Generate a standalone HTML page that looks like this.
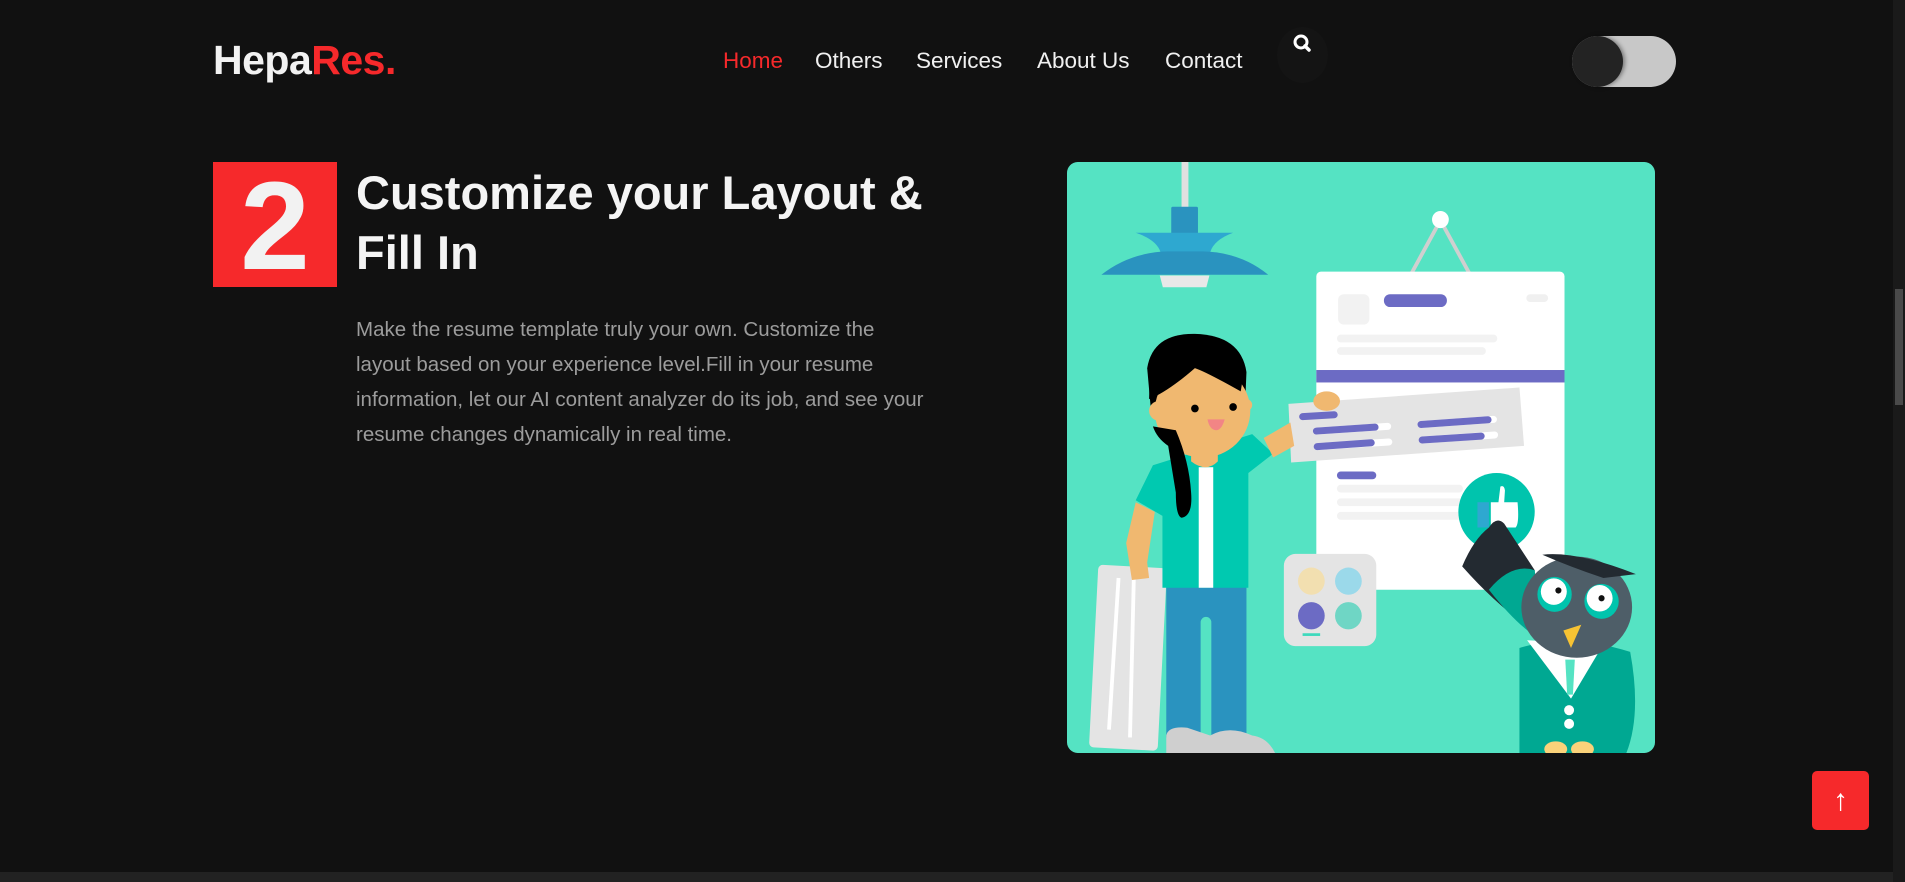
<!DOCTYPE html>
<html><head><meta charset="utf-8"><style>
html,body{margin:0;padding:0}
body{width:1905px;height:882px;background:#111;overflow:hidden;position:relative;font-family:"Liberation Sans",Arial,sans-serif}
.logo{position:absolute;left:213px;top:37px;font-size:41px;font-weight:bold;color:#f2f2f2;letter-spacing:-0.5px}
.logo span{color:#f6292b}
.nav{position:absolute;top:48px;left:723px;font-size:22.5px;color:#f0f0f0}
.nav a{position:absolute;white-space:nowrap}
.search{position:absolute;left:1277px;top:27px;width:51px;height:56px;border-radius:50%;background:#141414}
.tog{position:absolute;left:1572px;top:36px;width:104px;height:51px;border-radius:26px;background:#c8c8c8}
.tog i{position:absolute;left:0;top:0;width:51px;height:51px;border-radius:50%;background:#232323;box-shadow:2px 0 4px rgba(0,0,0,.4)}
.num{position:absolute;left:213px;top:162px;width:124px;height:125px;background:#f6292b;color:#f2f2f2;font-weight:bold;font-size:125px;line-height:130px;text-align:center;overflow:hidden}
h1{position:absolute;left:356px;top:163px;margin:0;font-size:47px;line-height:60px;color:#f4f4f4;font-weight:bold;width:600px}
p{position:absolute;left:356px;top:312px;margin:0;width:600px;font-size:20.5px;line-height:35px;color:#9c9c9c}
.up{position:absolute;left:1812px;top:771px;width:57px;height:59px;background:#f6292b;border-radius:5px;color:#fff;font-size:30px;text-align:center;line-height:59px}
.sb{position:absolute;right:0;top:0;width:12px;height:882px;background:#1a1a1a}
.sb i{position:absolute;left:2px;top:289px;width:8px;height:116px;background:#4a4a4a}
.bot{position:absolute;left:0;top:872px;width:1893px;height:10px;background:#222}
</style></head><body>
<div class="logo">Hepa<span>Res.</span></div>
<div class="nav">
<a style="left:0;color:#f6292b">Home</a>
<a style="left:92px">Others</a>
<a style="left:193px">Services</a>
<a style="left:314px">About Us</a>
<a style="left:442px">Contact</a>
</div>
<div class="search"><svg width="51" height="30" viewBox="0 0 51 30"><circle cx="24" cy="15" r="6" fill="none" stroke="#fff" stroke-width="3"/><line x1="28" y1="19" x2="32" y2="23" stroke="#fff" stroke-width="3.5" stroke-linecap="round"/></svg></div>
<div class="tog"><i></i></div>
<div class="num">2</div>
<h1>Customize your Layout &amp; Fill In</h1>
<p>Make the resume template truly your own. Customize the<br>layout based on your experience level.Fill in your resume<br>information, let our AI content analyzer do its job, and see your<br>resume changes dynamically in real time.</p>

<svg style="position:absolute;left:1067px;top:162px" width="588" height="591" viewBox="15 30 1540 1520" preserveAspectRatio="none">
<defs><clipPath id="c"><rect x="15" y="30" width="1540" height="1520" rx="28"/></clipPath></defs>
<g clip-path="url(#c)">
<rect x="15" y="30" width="1540" height="1520" fill="#55e3c3"/>
<rect x="315" y="20" width="18" height="135" fill="#e0e0e0"/>
<rect x="288" y="145" width="70" height="72" fill="#2a93bf" rx="4"/>
<path d="M195 212 L450 212 Q400 230 390 262 L260 262 Q250 230 195 212Z" fill="#2ea8d0"/>
<path d="M105 320 Q180 262 280 260 L370 260 Q470 262 542 320Z" fill="#2a93bf"/>
<path d="M258 322 L388 322 L380 352 L266 352Z" fill="#e8e8e8"/>
<line x1="993" y1="180" x2="918" y2="315" stroke="#cfcfcf" stroke-width="10"/>
<line x1="993" y1="180" x2="1068" y2="315" stroke="#cfcfcf" stroke-width="10"/>
<circle cx="993" cy="178" r="22" fill="#fff"/>
<rect x="668" y="312" width="650" height="818" rx="12" fill="#fff"/>
<rect x="725" y="370" width="82" height="78" rx="15" fill="#f2f2f2"/>
<rect x="845" y="370" width="165" height="33" rx="16" fill="#6c6bc4"/>
<rect x="1218" y="370" width="57" height="20" rx="10" fill="#f0f0f0"/>
<rect x="722" y="474" width="420" height="20" rx="10" fill="#f2f2f2"/>
<rect x="722" y="506" width="390" height="20" rx="10" fill="#f2f2f2"/>
<rect x="668" y="565" width="650" height="32" fill="#6c6bc4"/>
<rect x="722" y="826" width="103" height="20" rx="10" fill="#6c6bc4"/>
<rect x="722" y="860" width="330" height="20" rx="10" fill="#f2f2f2"/>
<rect x="722" y="895" width="330" height="20" rx="10" fill="#f2f2f2"/>
<rect x="722" y="930" width="330" height="20" rx="10" fill="#f2f2f2"/>
<path d="M595 652 L1200 610 L1212 760 L602 803Z" fill="#e4e4e4"/>
<line x1="632" y1="685" x2="715" y2="680" stroke="#6c6bc4" stroke-width="18" stroke-linecap="round"/>
<line x1="668" y1="722" x2="855" y2="710" stroke="#fff" stroke-width="18" stroke-linecap="round"/>
<line x1="668" y1="722" x2="822" y2="712" stroke="#6c6bc4" stroke-width="18" stroke-linecap="round"/>
<line x1="670" y1="762" x2="858" y2="750" stroke="#fff" stroke-width="18" stroke-linecap="round"/>
<line x1="670" y1="762" x2="812" y2="752" stroke="#6c6bc4" stroke-width="18" stroke-linecap="round"/>
<line x1="942" y1="705" x2="1132" y2="692" stroke="#fff" stroke-width="18" stroke-linecap="round"/>
<line x1="942" y1="705" x2="1118" y2="693" stroke="#6c6bc4" stroke-width="18" stroke-linecap="round"/>
<line x1="945" y1="745" x2="1135" y2="732" stroke="#fff" stroke-width="18" stroke-linecap="round"/>
<line x1="945" y1="745" x2="1100" y2="735" stroke="#6c6bc4" stroke-width="18" stroke-linecap="round"/>
<rect x="583" y="1038" width="242" height="237" rx="30" fill="#e4e4e4"/>
<circle cx="655" cy="1108" r="35" fill="#f2dfb0"/><circle cx="752" cy="1108" r="35" fill="#9bd9ea"/>
<circle cx="655" cy="1197" r="35" fill="#6c6bc4"/><circle cx="752" cy="1197" r="35" fill="#6fd6c5"/>
<rect x="632" y="1242" width="46" height="7" fill="#3ed9bd"/>
<circle cx="1140" cy="930" r="100" fill="#00c4ad"/>
<path d="M1125 905 L1145 905 L1150 865 Q1160 860 1162 875 L1160 905 L1195 905 Q1200 960 1190 970 L1125 970Z" fill="#fff"/>
<rect x="1090" y="905" width="30" height="65" fill="#2ea8d0"/>
<!-- woman -->
<rect x="85" y="1070" width="180" height="470" rx="12" fill="#e4e4e4" transform="rotate(3 175 1300)"/>
<line x1="150" y1="1100" x2="125" y2="1490" stroke="#fff" stroke-width="10"/>
<line x1="190" y1="1100" x2="180" y2="1510" stroke="#fff" stroke-width="10"/>
<rect x="275" y="1110" width="210" height="400" fill="#2a93bf"/>
<rect x="365" y="1200" width="28" height="320" rx="14" fill="#55e3c3"/>
<path d="M275 1505 Q280 1480 330 1485 L390 1505 Q440 1478 500 1505 Q540 1510 560 1550 L275 1550Z" fill="#cfcfcf"/>
<path d="M240 810 L500 730 L555 780 L490 830 L490 1125 L265 1125 L265 940 L195 900Z" fill="#00c9b0"/>
<rect x="360" y="815" width="38" height="310" fill="#fff"/>
<path d="M530 740 L600 700 L610 760 L555 790Z" fill="#f0b870"/>
<ellipse cx="695" cy="645" rx="35" ry="25" fill="#f0b870"/>
<path d="M195 905 L245 930 L225 1060 L230 1100 L185 1105 L170 1010Z" fill="#f0b870"/>
<path d="M340 760 L410 760 L410 800 Q380 830 340 800Z" fill="#f0b870"/>
<path d="M225 560 Q240 470 350 472 Q470 475 485 570 L480 690 L235 670Z" fill="#000"/>
<ellipse cx="370" cy="670" rx="125" ry="120" fill="#f0b870"/>
<path d="M230 640 Q280 620 350 560 Q380 570 470 620 L480 560 Q440 490 350 490 Q250 490 232 560Z" fill="#000"/>
<circle cx="255" cy="670" r="25" fill="#f0b870"/>
<circle cx="485" cy="655" r="15" fill="#f0b870"/>
<circle cx="350" cy="664" r="10" fill="#000"/><circle cx="450" cy="660" r="10" fill="#000"/>
<path d="M383 692 L428 692 Q420 720 405 720 Q388 718 383 692Z" fill="#f28585"/>
<path d="M240 710 Q250 740 280 760 Q290 820 300 880 Q300 940 315 945 Q345 940 340 880 Q335 800 300 720Z" fill="#000"/>
<!-- owl -->
<path d="M1200 1280 Q1330 1240 1490 1290 Q1520 1450 1480 1550 L1200 1550Z" fill="#00a892"/>
<path d="M1050 1070 Q1080 1000 1120 970 Q1140 940 1160 960 L1240 1080 L1230 1230 Q1140 1170 1050 1070Z" fill="#232a31"/>
<path d="M1120 1130 Q1180 1060 1240 1080 L1260 1260 Q1200 1230 1120 1130Z" fill="#00a892"/>
<path d="M1220 1260 L1420 1270 L1335 1410Z" fill="#fff"/>
<path d="M1320 1310 L1345 1310 L1340 1400 L1325 1400Z" fill="#55e3c3"/>
<ellipse cx="1350" cy="1175" rx="145" ry="130" fill="#4e5e68"/>
<path d="M1260 1040 Q1350 1030 1505 1090 L1420 1100 Q1330 1070 1260 1040Z" fill="#232a31"/>
<circle cx="1292" cy="1142" r="45" fill="#00c4ad"/><circle cx="1415" cy="1160" r="45" fill="#00c4ad"/>
<circle cx="1290" cy="1135" r="34" fill="#fff"/><circle cx="1410" cy="1152" r="34" fill="#fff"/>
<circle cx="1302" cy="1132" r="8" fill="#111"/><circle cx="1415" cy="1152" r="8" fill="#111"/>
<path d="M1315 1235 L1362 1220 L1335 1280Z" fill="#f7c333"/>
<circle cx="1330" cy="1440" r="13" fill="#fff"/><circle cx="1330" cy="1475" r="13" fill="#fff"/>
<ellipse cx="1295" cy="1540" rx="30" ry="20" fill="#fad27a"/><ellipse cx="1365" cy="1540" rx="30" ry="20" fill="#fad27a"/>
</g>
</svg>

<div class="up">↑</div>
<div class="bot"></div>
<div class="sb"><i></i></div>
</body></html>
